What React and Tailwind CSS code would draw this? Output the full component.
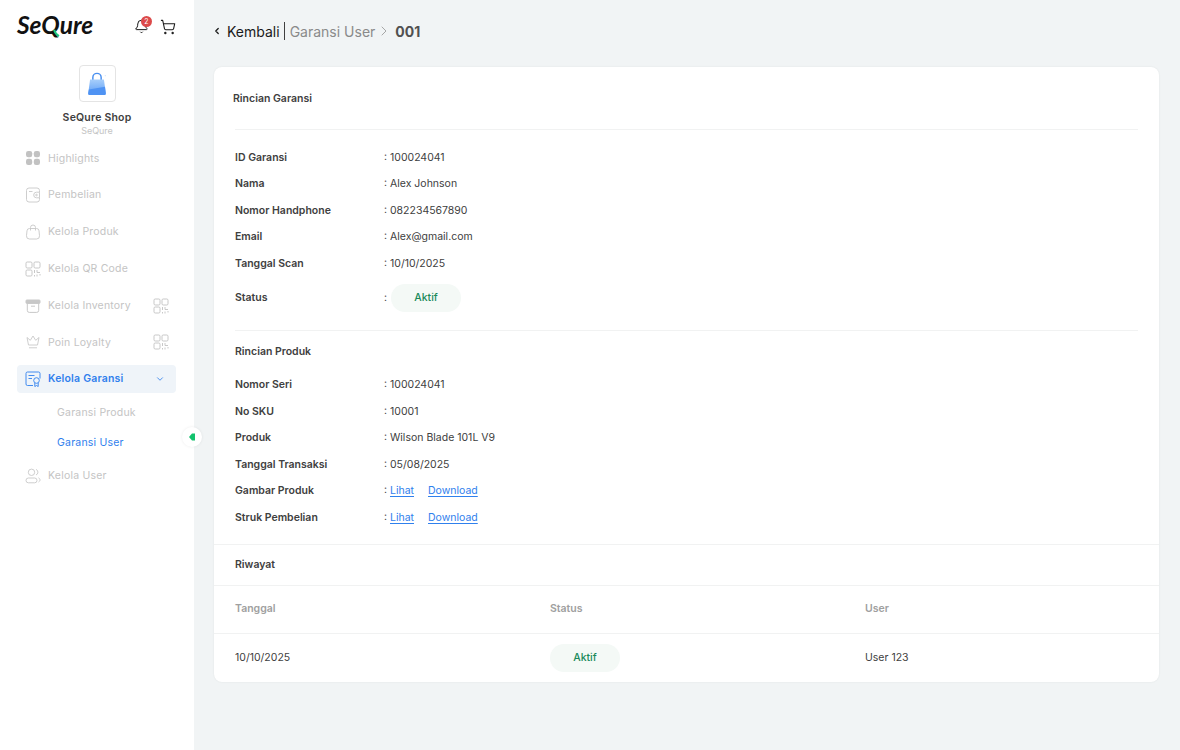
import { Bell, ShoppingCart, ChevronLeft, ChevronRight, ChevronDown } from "lucide-react";

const QrIcon = ({ className }) => (
  <svg viewBox="0 0 16 16" fill="none" stroke="currentColor" strokeWidth="1" className={className}>
    <rect x="1" y="1" width="6" height="6" rx="1.2" />
    <rect x="9" y="1" width="6" height="6" rx="1.2" />
    <rect x="1" y="9" width="6" height="6" rx="1.2" />
    <path d="M9.5 9v3M9.5 14v1.5M12 9v2.5h3M12 13.5v2M15 13v1.5" />
  </svg>
);

const GridIcon = ({ className }) => (
  <svg viewBox="0 0 16 16" fill="currentColor" className={className}>
    <rect x="1" y="1" width="6.2" height="6.2" rx="2.2" />
    <rect x="8.8" y="1" width="6.2" height="6.2" rx="2.2" />
    <rect x="1" y="8.8" width="6.2" height="6.2" rx="2.2" />
    <rect x="8.8" y="8.8" width="6.2" height="6.2" rx="2.2" />
  </svg>
);

const WalletIcon = ({ className }) => (
  <svg viewBox="0 0 16 16" fill="none" stroke="currentColor" strokeWidth="0.9" className={className}>
    <path d="M14.5 5V3.5A2.500 2.500 0 0 0 12 1H4a2.500 2.500 0 0 0-2.500 2.500v9A2.500 2.500 0 0 0 4 15h8a2.500 2.500 0 0 0 2.500-2.500V11" />
    <path d="M4 4.5h3.500" />
    <path d="M14.5 5.200h-3a2.800 2.800 0 0 0 0 5.600h3z" />
    <circle cx="11.5" cy="8" r="0.8" />
  </svg>
);

const BagIcon = ({ className }) => (
  <svg viewBox="0 0 16 16" fill="none" stroke="currentColor" strokeWidth="0.9" className={className}>
    <path d="M4.500 4.500h7a2.500 2.500 0 0 1 2.500 2.300l.5 4.900a3 3 0 0 1-3 3.300h-7a3 3 0 0 1-3-3.300l.5-4.900a2.500 2.500 0 0 1 2.500-2.300z" />
    <path d="M5.500 6.500V3.500a2.500 2.500 0 0 1 5 0v3" />
  </svg>
);

const BoxIcon = ({ className }) => (
  <svg viewBox="0 0 16 16" fill="none" stroke="currentColor" strokeWidth="1" className={className}>
    <rect x="1" y="2" width="14" height="3.400" rx="0.8" fill="currentColor" />
    <path d="M2.300 5.400v7a2 2 0 0 0 2 2h7.400a2 2 0 0 0 2-2v-7" />
    <path d="M6 8.200h4" />
  </svg>
);

const CrownIcon = ({ className }) => (
  <svg viewBox="0 0 16 16" fill="none" stroke="currentColor" strokeWidth="0.9" strokeLinejoin="round" className={className}>
    <path d="M3.500 11L2 3.500l3.300 2.800L8 2l2.700 4.300L14 3.500 12.500 11z" />
    <path d="M4 13.800h8" />
  </svg>
);

const WarrantyIcon = ({ className }) => (
  <svg viewBox="0 0 16 16" fill="none" stroke="currentColor" strokeWidth="0.9" className={className}>
    <path d="M8 14.500H2.500a1.500 1.500 0 0 1-1.500-1.500V2.500A1.500 1.500 0 0 1 2.500 1h11A1.500 1.500 0 0 1 15 2.500V7.500" />
    <path d="M3.500 4.500h6M3.500 7.500h3.500" />
    <circle cx="11.5" cy="9.500" r="2.800" />
    <path d="M9.800 12v3.500l1.700-1 1.700 1V12" />
  </svg>
);

const UserIcon = ({ className }) => (
  <svg viewBox="0 0 16 16" fill="none" stroke="currentColor" strokeWidth="0.9" className={className}>
    <circle cx="6.500" cy="4.300" r="3.200" />
    <rect x="1" y="10" width="11" height="4.800" rx="2.400" />
    <path d="M11 1.400a3 3 0 0 1 0 5.600M13.500 9.800c1 .5 1.500 1.300 1.500 2.200s-.5 1.500-1.500 2" />
  </svg>
);

const menu = [
  { label: "Highlights", Icon: GridIcon, fill: true },
  { label: "Pembelian", Icon: WalletIcon },
  { label: "Kelola Produk", Icon: BagIcon },
  { label: "Kelola QR Code", Icon: QrIcon },
  { label: "Kelola Inventory", Icon: BoxIcon, qr: true },
  { label: "Poin Loyalty", Icon: CrownIcon, qr: true },
];

const garansi = [
  ["ID Garansi", "100024041"],
  ["Nama", "Alex Johnson"],
  ["Nomor Handphone", "082234567890"],
  ["Email", "Alex@gmail.com"],
  ["Tanggal Scan", "10/10/2025"],
];

const produk = [
  ["Nomor Seri", "100024041"],
  ["No SKU", "10001"],
  ["Produk", "Wilson Blade 101L V9"],
  ["Tanggal Transaksi", "05/08/2025"],
];

const Row = ({ label, children }) => (
  <div className="flex h-[26.5px] items-center">
    <div className="w-[149px] font-semibold text-[#404040]">{label}</div>
    <div className="text-[#404040]">{children}</div>
  </div>
);

const Links = () => (
  <span className="flex gap-[14px]">
    <span>
      : <a className="text-[#2f80ed] underline underline-offset-2">Lihat</a>
    </span>
    <a className="text-[#2f80ed] underline underline-offset-2">Download</a>
  </span>
);

const Badge = () => (
  <span className="flex h-[28px] w-[70px] items-center justify-center rounded-full bg-[#f4f9f6] font-medium text-[#1a8a5a]">
    Aktif
  </span>
);

const Sidebar = () => (
  <aside className="relative flex w-[194px] shrink-0 flex-col bg-white">
    <div className="flex h-[65px] items-start pl-[17px] pt-[10px]">
      <div className="relative w-[100px] font-['Lato',sans-serif] text-[24.5px] leading-[30px] font-bold text-[#111] italic">
        SeQure
        <svg viewBox="0 0 8 10" className="absolute left-[36px] top-[19px] h-[8px] w-[7px]">
          <path d="M1 1c1 4 3 6 6 8" fill="none" stroke="#1ec77c" strokeWidth="2.600" />
        </svg>
      </div>
      <div className="relative ml-[17px] mt-[9px]">
        <Bell className="size-[15px] text-[#1a1a1a]" strokeWidth={1.6} />
        <span className="absolute -right-[3px] -top-[3px] flex size-[11px] items-center justify-center rounded-full bg-[#dc4a4a] text-[7px] leading-none text-white">
          2
        </span>
      </div>
      <ShoppingCart className="ml-[11px] mt-[9px] size-[16px] text-[#1a1a1a]" strokeWidth={1.6} />
    </div>

    <div className="flex flex-col items-center">
      <div className="flex size-[37px] items-center justify-center rounded-[4px] border border-[#e4e4e4]">
        <svg viewBox="0 0 24 26" className="size-[24px]">
          <defs>
            <linearGradient id="bag" x1="0" y1="0" x2="0" y2="1">
              <stop offset="0" stopColor="#a8cffb" />
              <stop offset="1" stopColor="#5a9cf5" />
            </linearGradient>
          </defs>
          <path d="M7.500 9V6a4.500 4.500 0 0 1 9 0v3" fill="none" stroke="#4a90f0" strokeWidth="1.600" />
          <path d="M4.500 8h15l2 15a1.500 1.500 0 0 1-1.500 1.800H4a1.500 1.500 0 0 1-1.500-1.800z" fill="url(#bag)" />
          <path d="M3.200 19L20.700 16l.800 7a1.500 1.500 0 0 1-1.500 1.800H4a1.500 1.500 0 0 1-1.500-1.800z" fill="#4f93f3" />
          <circle cx="21" cy="4" r="0.700" fill="#cfe2fb" />
        </svg>
      </div>
      <div className="mt-[9px] text-[10.5px] leading-[14px] font-semibold tracking-[0.2px] text-[#404040]">SeQure Shop</div>
      <div className="text-[9px] leading-[11px] text-[#c4c4c4]">SeQure</div>
    </div>

    <nav className="mt-[4px] flex flex-col text-[10.5px] tracking-[0.2px] text-[#c4c4c4]">
      {menu.map(({ label, Icon, fill, qr }) => (
        <div key={label} className="flex h-[36.8px] items-center px-[25px]">
          <Icon className={`size-[16px] ${fill ? "text-[#c2c2c2]" : "text-[#c8c8c8]"}`} />
          <span className="ml-[7px] flex-1">{label}</span>
          {qr && <QrIcon className="size-[16px] text-[#c8c8c8]" />}
        </div>
      ))}
      <div className="mx-[17px] mt-[4px] flex h-[28px] w-[159px] items-center rounded-[4px] bg-[#eff4f9] pl-[8px] pr-[11px] font-semibold text-[#2f80ed]">
        <WarrantyIcon className="size-[16px]" />
        <span className="ml-[7px] flex-1">Kelola Garansi</span>
        <ChevronDown className="size-[10px]" strokeWidth={2} />
      </div>
      <div className="mt-[5px] flex h-[30px] items-center pl-[57px]">Garansi Produk</div>
      <div className="flex h-[30px] items-center pl-[57px] text-[#2f80ed]">Garansi User</div>
      <div className="flex h-[36.8px] items-center pl-[25px]">
        <UserIcon className="size-[16px] text-[#c8c8c8]" />
        <span className="ml-[7px]">Kelola User</span>
      </div>
    </nav>

    <div className="absolute left-[182px] top-[427px] flex size-[20px] items-center justify-center rounded-full bg-white shadow-[0_0_3px_rgba(0,0,0,0.08)]">
      <svg viewBox="0 0 8 8" className="size-[8px]">
        <path d="M7 0.500v7H4L1 4l3-3.500z" fill="#12c26d" />
      </svg>
    </div>
  </aside>
);

export default function App() {
  return (
    <div className="flex h-[750px] w-[1180px] overflow-hidden bg-[#f1f4f5] font-['Inter',sans-serif]">
      <Sidebar />
      <main className="flex-1 pl-[20px] pr-[21px]">
        <div className="flex h-[67px] items-center pb-[5px] text-[14px]">
          <ChevronLeft className="-ml-[2.5px] size-[10px] text-[#1a1a1a]" strokeWidth={3} />
          <span className="ml-[5.5px] text-[#1a1a1a]">Kembali</span>
          <span className="ml-[4px] mr-[5px] h-[18px] w-px bg-[#404040]" />
          <span className="text-[#8a8a8a]">Garansi User</span>
          <ChevronRight className="ml-[1px] mr-[3px] size-[16px] text-[#9a9a9a]" strokeWidth={1.3} />
          <span className="font-bold text-[#505050]">001</span>
        </div>

        <section className="h-[615px] w-[945px] rounded-[8px] bg-white text-[10.5px] shadow-[0_0_2px_rgba(0,0,0,0.08)]">
          <div className="px-[21px]">
            <div className="flex h-[63px] items-center border-b border-[#f1f2f2] pt-[2px] font-semibold text-[#404040]">
              <span className="-ml-[2px]">Rincian Garansi</span>
            </div>
          </div>
          <div className="px-[21px] pt-[14.5px]">
            {garansi.map(([k, v]) => (
              <Row key={k} label={k}>: {v}</Row>
            ))}
            <div className="flex h-[42px] items-center">
              <div className="w-[149px] font-semibold text-[#404040]">Status</div>
              <div className="-mt-[1px] flex items-center gap-[4px] text-[#404040]">
                : <Badge />
              </div>
            </div>
          </div>
          <div className="mx-[21px] mt-[11px] border-t border-[#f1f2f2] pb-[8px] pt-[13px] font-semibold text-[#404040]">
            Rincian Produk
          </div>
          <div className="px-[21px] pt-[4px]">
            {produk.map(([k, v]) => (
              <Row key={k} label={k}>: {v}</Row>
            ))}
            <Row label="Gambar Produk"><Links /></Row>
            <Row label="Struk Pembelian"><Links /></Row>
          </div>
          <div className="mt-[13px] flex h-[42px] items-center border-y border-[#f1f2f2] px-[21px] font-semibold text-[#404040]">
            Riwayat
          </div>
          <div className="flex h-[48px] items-center border-b border-[#f1f2f2] px-[21px] font-semibold text-[#a0a0a0]">
            <div className="w-[315px]">Tanggal</div>
            <div className="w-[315px]">Status</div>
            <div>User</div>
          </div>
          <div className="flex h-[49px] items-center px-[21px] text-[#404040]">
            <div className="w-[315px]">10/10/2025</div>
            <div className="w-[315px]"><Badge /></div>
            <div>User 123</div>
          </div>
        </section>
      </main>
    </div>
  );
}
